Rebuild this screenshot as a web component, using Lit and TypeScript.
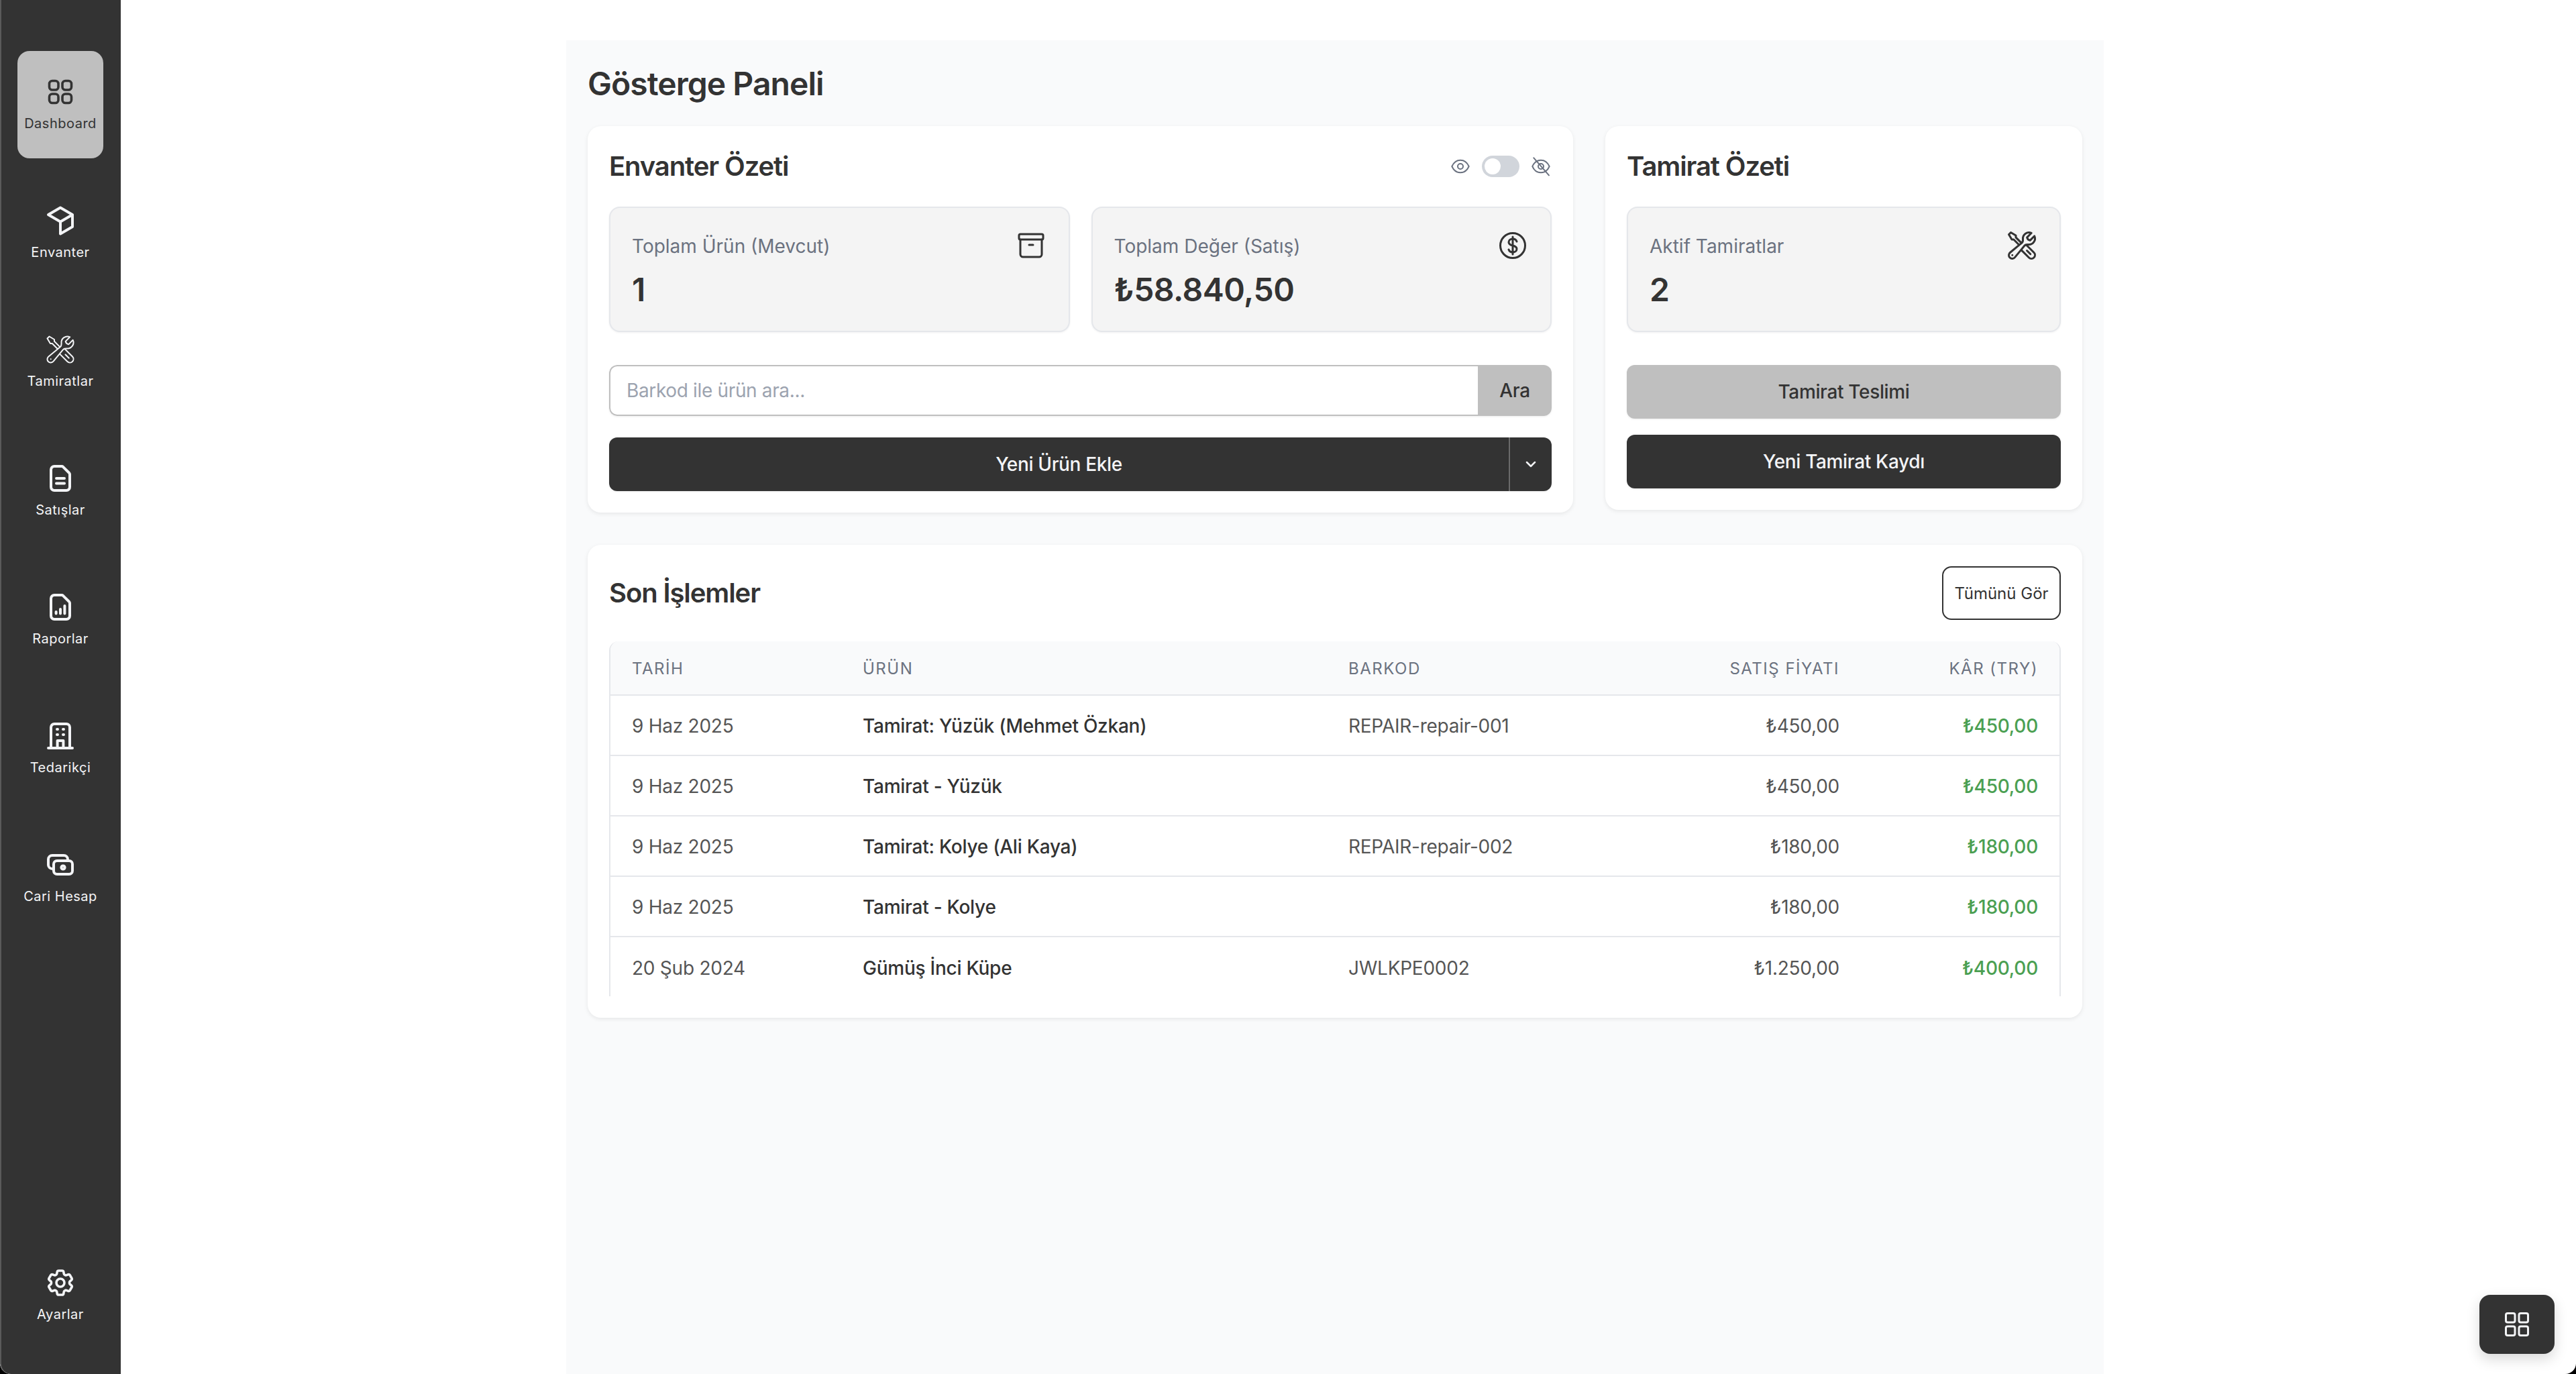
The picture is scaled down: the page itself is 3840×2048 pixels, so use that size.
import { LitElement, html, css, svg } from "lit";
import { customElement } from "lit/decorators.js";

const DOC_OUTLINE = "M7.5 3H13a1.500 1.500 0 0 1 1 .4L18.600 8a1.500 1.500 0 0 1 .4 1v9.500a2.500 2.500 0 0 1-2.500 2.500h-9A2.500 2.500 0 0 1 5 18.500v-13A2.500 2.500 0 0 1 7.500 3Z";

const ICONS = {
  grid: svg`<path stroke-width="1.8" d="M3.75 6A2.25 2.25 0 0 1 6 3.75h2.25A2.25 2.25 0 0 1 10.5 6v2.25a2.25 2.25 0 0 1-2.25 2.25H6a2.25 2.25 0 0 1-2.25-2.25V6ZM3.75 15.75A2.25 2.25 0 0 1 6 13.5h2.25a2.25 2.25 0 0 1 2.25 2.25V18a2.25 2.25 0 0 1-2.25 2.25H6A2.25 2.25 0 0 1 3.75 18v-2.25ZM13.5 6a2.25 2.25 0 0 1 2.25-2.25H18A2.25 2.25 0 0 1 20.25 6v2.25A2.25 2.25 0 0 1 18 10.5h-2.25a2.25 2.25 0 0 1-2.25-2.25V6ZM13.5 15.75a2.25 2.25 0 0 1 2.25-2.25H18a2.25 2.25 0 0 1 2.25 2.25V18A2.25 2.25 0 0 1 18 20.25h-2.25A2.25 2.25 0 0 1 13.5 18v-2.25Z"/>`,
  squares: svg`<rect x="3.750" y="3.750" width="6.750" height="6.750" rx="1.300"/><rect x="13.500" y="3.750" width="6.750" height="6.750" rx="1.300"/><rect x="3.750" y="13.500" width="6.750" height="6.750" rx="1.300"/><rect x="13.500" y="13.500" width="6.750" height="6.750" rx="1.300"/>`,
  cube: svg`<path stroke-width="2" d="M21 7.500l-9-5.250L3 7.500l9 5.250L21 7.500v9l-9 5.250v-9"/>`,
  wrench: svg`<path class="thin" d="M11.420 15.170 17.250 21A2.652 2.652 0 0 0 21 17.250l-5.877-5.877M11.420 15.170l2.496-3.030c.317-.384.740-.626 1.208-.766M11.420 15.170l-4.655 5.653a2.548 2.548 0 1 1-3.586-3.586l6.837-5.630m5.108-.233c.550-.164 1.163-.188 1.743-.140a4.500 4.500 0 0 0 4.486-6.336l-3.276 3.277a3.004 3.004 0 0 1-2.250-2.250l3.276-3.276a4.500 4.500 0 0 0-6.336 4.486c.091 1.076-.071 2.264-.904 2.950l-.102.085m-1.745 1.437L5.909 7.500H4.500L2.250 3.750l1.500-1.500L7.500 4.500v1.409l4.260 4.260m-1.745 1.437 1.745-1.437m6.615 8.206L15.750 15.750M4.867 19.125h.008v.008h-.008v-.008Z"/>`,
  doc: svg`<path stroke-width="2" d="${DOC_OUTLINE}"/><path stroke-width="2" d="M9 12h6M9 15.800h6"/>`,
  report: svg`<path stroke-width="2" d="${DOC_OUTLINE}"/><path stroke-width="2" d="M8.800 16.700v-1.200M12 16.700v-3.200M15.200 16.700v-5.700"/>`,
  building: svg`<path stroke-width="2" d="M5 21V5.500A2.500 2.500 0 0 1 7.500 3h9A2.500 2.500 0 0 1 19 5.500V21M3 21h18M9.800 21v-5.500h4.400V21"/><path stroke-width="2" d="M9.500 7h.5M14 7h.5M9.500 11h.5M14 11h.5"/>`,
  cash: svg`<rect stroke-width="2" x="7" y="9" width="14" height="10" rx="2.500"/><path stroke-width="2" d="M17.500 9V8a3 3 0 0 0-3-3H6a3 3 0 0 0-3 3v4.200a3 3 0 0 0 3 2.800h1"/><circle stroke-width="2" cx="14" cy="14" r="1.300"/>`,
  cog: svg`<g stroke-width="1.800"><path d="M9.594 3.940c.090-.542.560-.940 1.110-.940h2.593c.550 0 1.020.398 1.110.940l.213 1.281c.063.374.313.686.645.870.074.040.147.083.220.127.325.196.720.257 1.075.124l1.217-.456a1.125 1.125 0 0 1 1.370.490l1.296 2.247a1.125 1.125 0 0 1-.260 1.431l-1.003.827c-.293.241-.438.613-.430.992a7.723 7.723 0 0 1 0 .255c-.008.378.137.750.430.991l1.004.827c.424.350.534.955.260 1.430l-1.298 2.247a1.125 1.125 0 0 1-1.369.491l-1.217-.456c-.355-.133-.750-.072-1.076.124a6.470 6.470 0 0 1-.220.128c-.331.183-.581.495-.644.869l-.213 1.281c-.090.543-.560.940-1.110.940h-2.594c-.550 0-1.019-.398-1.110-.940l-.213-1.281c-.062-.374-.312-.686-.644-.870a6.520 6.520 0 0 1-.220-.127c-.325-.196-.720-.257-1.076-.124l-1.217.456a1.125 1.125 0 0 1-1.369-.490l-1.297-2.247a1.125 1.125 0 0 1 .260-1.431l1.004-.827c.292-.240.437-.613.430-.991a6.932 6.932 0 0 1 0-.255c.007-.380-.138-.751-.430-.992l-1.004-.827a1.125 1.125 0 0 1-.260-1.430l1.297-2.247a1.125 1.125 0 0 1 1.370-.491l1.216.456c.356.133.751.072 1.076-.124.072-.044.146-.086.220-.128.332-.183.582-.495.644-.869l.214-1.280Z"/><path d="M15 12a3 3 0 1 1-6 0 3 3 0 0 1 6 0Z"/></g>`,
  archive: svg`<path d="M4 7.500v11a2 2 0 0 0 2 2h12a2 2 0 0 0 2-2v-11"/><rect x="3" y="3.500" width="18" height="4" rx="1"/><path d="M10.500 11.500h3"/>`,
  dollar: svg`<circle cx="12" cy="12" r="9.250"/><path d="M15 9c-.4-1.200-1.600-2-3-2-1.700 0-3 1-3 2.500S10.300 11.600 12 12c1.700.4 3 1 3 2.500S13.700 17 12 17c-1.400 0-2.600-.8-3-2M12 5.500v13"/>`,
  eye: svg`<path d="M2.500 12C4.500 7.500 8 5 12 5s7.500 2.500 9.500 7c-2 4.500-5.500 7-9.500 7s-7.500-2.500-9.500-7Z"/><circle cx="12" cy="12" r="3"/>`,
  eyeOff: svg`<path d="M2.500 12C4.500 7.500 8 5 12 5s7.500 2.500 9.500 7c-2 4.500-5.500 7-9.500 7s-7.500-2.500-9.500-7Z"/><circle cx="12" cy="12" r="3"/><path d="M4 2.500 21 22"/>`,
  chevron: svg`<path stroke-width="2.500" d="m6 9 6 6 6-6"/>`,
};

type IconName = keyof typeof ICONS;

const icon = (name: IconName) => html`<svg class="icon" viewBox="0 0 24 24" fill="none" stroke="currentColor" stroke-width="1.5" stroke-linejoin="round" stroke-linecap="round">${ICONS[name]}</svg>`;

const NAV: { label: string; icon: IconName; active?: boolean }[] = [
  { label: "Dashboard", icon: "grid", active: true },
  { label: "Envanter", icon: "cube" },
  { label: "Tamiratlar", icon: "wrench" },
  { label: "Satışlar", icon: "doc" },
  { label: "Raporlar", icon: "report" },
  { label: "Tedarikçi", icon: "building" },
  { label: "Cari Hesap", icon: "cash" },
];

const ROWS = [
  { date: "9 Haz 2025", name: "Tamirat: Yüzük (Mehmet Özkan)", code: "REPAIR-repair-001", price: "₺450,00", profit: "₺450,00" },
  { date: "9 Haz 2025", name: "Tamirat - Yüzük", code: "", price: "₺450,00", profit: "₺450,00" },
  { date: "9 Haz 2025", name: "Tamirat: Kolye (Ali Kaya)", code: "REPAIR-repair-002", price: "₺180,00", profit: "₺180,00" },
  { date: "9 Haz 2025", name: "Tamirat - Kolye", code: "", price: "₺180,00", profit: "₺180,00" },
  { date: "20 Şub 2024", name: "Gümüş İnci Küpe", code: "JWLKPE0002", price: "₺1.250,00", profit: "₺400,00" },
];

@customElement("app-root")
export class AppRoot extends LitElement {
  static styles = css`
    :host {
      display: block;
      font-family: Inter, "Liberation Sans", sans-serif;
      color: #333;
      background: #000;
    }
    .window {
      display: flex;
      height: 2048px;
      background: #fff;
      border-radius: 0 0 16px 16px;
      overflow: hidden;
      position: relative;
    }
    .icon {
      width: 48px;
      height: 48px;
      display: block;
      flex: none;
    }
    .thin {
      stroke-width: 1;
    }
    .sidebar {
      width: 180px;
      flex: none;
      box-sizing: border-box;
      background: #333;
      border-left: 2px solid #5a5a5a;
      border-bottom-left-radius: 16px;
      padding: 76px 26px 37px 24px;
      display: flex;
      flex-direction: column;
      gap: 32px;
      color: #f3f4f6;
    }
    .nav-item {
      height: 160px;
      border-radius: 18px;
      display: flex;
      flex-direction: column;
      align-items: center;
      justify-content: center;
      gap: 8px;
      font-size: 20px;
      line-height: 30px;
      letter-spacing: 0.5px;
    }
    .nav-item.active {
      background: #bfbfbf;
      color: #333;
    }
    .spacer {
      flex: 1;
    }
    .content {
      flex: 1;
      padding: 60px 40px 0 0;
      display: flex;
      justify-content: center;
    }
    .panel {
      width: 2292px;
      box-sizing: border-box;
      background: #f9fafb;
      padding: 32px;
    }
    h1 {
      margin: 0 0 30px;
      font-size: 48px;
      line-height: 66px;
      font-weight: 600;
      letter-spacing: -0.95px;
    }
    h2 {
      margin: 0;
      font-size: 40px;
      line-height: 56px;
      font-weight: 600;
      letter-spacing: -1.1px;
    }
    .top {
      display: flex;
      align-items: flex-start;
      gap: 48px;
    }
    .card {
      background: #fff;
      border-radius: 20px;
      padding: 32px;
      box-shadow: 0 2px 6px rgba(0, 0, 0, 0.08);
      box-sizing: border-box;
    }
    .inventory {
      width: 1469px;
      flex: none;
    }
    .repairs {
      flex: 1;
    }
    .card-head {
      display: flex;
      align-items: center;
      justify-content: space-between;
      height: 56px;
      margin-bottom: 32px;
    }
    .toggle-group {
      display: flex;
      align-items: center;
      gap: 16px;
      color: #6b7280;
    }
    .toggle-group .icon {
      width: 32px;
      height: 32px;
    }
    .toggle {
      width: 56px;
      height: 32px;
      box-sizing: border-box;
      padding: 4px;
      border-radius: 16px;
      background: #d1d5db;
    }
    .knob {
      width: 24px;
      height: 24px;
      border-radius: 50%;
      background: #fff;
    }
    .stats {
      display: grid;
      grid-template-columns: 1fr 1fr;
      gap: 32px;
    }
    .stat {
      height: 187px;
      box-sizing: border-box;
      padding: 32px;
      background: #f4f4f4;
      border: 2px solid #e5e7eb;
      border-radius: 16px;
      box-shadow: 0 1px 3px rgba(0, 0, 0, 0.06);
      display: flex;
      justify-content: space-between;
      align-items: flex-start;
    }
    .stat .thin {
      stroke-width: 1.5;
    }
    .stat-text {
      padding-top: 5px;
    }
    .stat-label {
      font-size: 28px;
      line-height: 40px;
      color: #6b7280;
    }
    .stat-value {
      margin-top: 13px;
      font-size: 48px;
      line-height: 64px;
      font-weight: 600;
      letter-spacing: -0.5px;
    }
    .search {
      display: flex;
      height: 76px;
      margin-top: 49px;
      border-radius: 12px;
      overflow: hidden;
      box-shadow: 0 1px 3px rgba(0, 0, 0, 0.08);
    }
    .search-input {
      flex: 1;
      box-sizing: border-box;
      border: 2px solid #bfbfbf;
      border-right: none;
      border-radius: 12px 0 0 12px;
      padding: 0 24px;
      display: flex;
      align-items: center;
      font-size: 28px;
      letter-spacing: -0.35px;
      color: #9ca3af;
    }
    .search-btn {
      width: 110px;
      background: #bfbfbf;
      display: flex;
      align-items: center;
      justify-content: center;
      font-size: 28px;
      font-weight: 500;
      letter-spacing: -0.3px;
    }
    .btn {
      display: flex;
      align-items: center;
      justify-content: center;
      height: 80px;
      border-radius: 12px;
      font-size: 28px;
      font-weight: 500;
      letter-spacing: -0.35px;
      box-shadow: 0 1px 3px rgba(0, 0, 0, 0.08);
    }
    .btn.dark {
      background: #333;
      color: #f3f4f6;
    }
    .btn.grey {
      background: #bfbfbf;
    }
    .split {
      display: flex;
      margin-top: 32px;
    }
    .split .main-btn {
      flex: 1;
      border-radius: 12px 0 0 12px;
    }
    .split .caret {
      width: 64px;
      border-radius: 0 12px 12px 0;
      border-left: 2px solid #6b6b6b;
      box-sizing: border-box;
    }
    .caret .icon {
      width: 24px;
      height: 24px;
    }
    .repair-actions {
      margin-top: 49px;
      display: flex;
      flex-direction: column;
      gap: 24px;
    }
    .recent {
      margin-top: 48px;
      padding-bottom: 32px;
    }
    .recent-head {
      display: flex;
      align-items: center;
      justify-content: space-between;
      margin-bottom: 32px;
    }
    .outline-btn {
      width: 177px;
      height: 80px;
      box-sizing: border-box;
      border: 2.5px solid #333;
      border-radius: 14px;
      display: flex;
      align-items: center;
      justify-content: center;
      font-size: 24px;
    }
    .table {
      border: solid #e5e7eb;
      border-width: 0 2px;
      border-radius: 14px 14px 0 0;
      overflow: hidden;
      height: 529px;
      box-sizing: border-box;
    }
    .row {
      display: grid;
      grid-template-columns: 344px 724px 500px 1fr 296px;
      height: 90px;
      box-sizing: border-box;
      border-bottom: 2px solid #e5e7eb;
      align-items: center;
      font-size: 28px;
      letter-spacing: -0.25px;
      color: #555;
    }
    .row:last-child {
      border-bottom: none;
    }
    .row.head {
      height: 81px;
      background: #f9fafb;
      font-size: 24px;
      letter-spacing: 1.5px;
      color: #6b7280;
    }
    .cell {
      padding: 2px 32px 0;
    }
    .num {
      text-align: right;
    }
    .name {
      font-weight: 500;
      color: #333;
    }
    .profit {
      font-weight: 500;
      color: #4b9f52;
    }
    .fab {
      position: absolute;
      right: 32px;
      bottom: 30px;
      width: 112px;
      height: 88px;
      border-radius: 16px;
      background: #333;
      color: #f3f4f6;
      display: flex;
      align-items: center;
      justify-content: center;
      box-shadow: 0 8px 20px rgba(0, 0, 0, 0.15);
    }
  `;

  private navItem(item: (typeof NAV)[number]) {
    return html`<div class="nav-item ${item.active ? "active" : ""}">${icon(item.icon)}<span>${item.label}</span></div>`;
  }

  private stat(label: string, value: string, name: IconName) {
    return html`<div class="stat">
      <div class="stat-text">
        <div class="stat-label">${label}</div>
        <div class="stat-value">${value}</div>
      </div>
      ${icon(name)}
    </div>`;
  }

  render() {
    return html`
      <div class="window">
        <nav class="sidebar">
          ${NAV.map((n) => this.navItem(n))}
          <div class="spacer"></div>
          ${this.navItem({ label: "Ayarlar", icon: "cog" })}
        </nav>
        <main class="content">
          <div class="panel">
            <h1>Gösterge Paneli</h1>
            <div class="top">
              <section class="card inventory">
                <div class="card-head">
                  <h2>Envanter Özeti</h2>
                  <div class="toggle-group">
                    ${icon("eye")}
                    <div class="toggle"><div class="knob"></div></div>
                    ${icon("eyeOff")}
                  </div>
                </div>
                <div class="stats">
                  ${this.stat("Toplam Ürün (Mevcut)", "1", "archive")}
                  ${this.stat("Toplam Değer (Satış)", "₺58.840,50", "dollar")}
                </div>
                <div class="search">
                  <div class="search-input">Barkod ile ürün ara...</div>
                  <div class="search-btn">Ara</div>
                </div>
                <div class="split">
                  <div class="btn dark main-btn">Yeni Ürün Ekle</div>
                  <div class="btn dark caret">${icon("chevron")}</div>
                </div>
              </section>
              <section class="card repairs">
                <div class="card-head"><h2>Tamirat Özeti</h2></div>
                ${this.stat("Aktif Tamiratlar", "2", "wrench")}
                <div class="repair-actions">
                  <div class="btn grey">Tamirat Teslimi</div>
                  <div class="btn dark">Yeni Tamirat Kaydı</div>
                </div>
              </section>
            </div>
            <section class="card recent">
              <div class="recent-head">
                <h2>Son İşlemler</h2>
                <div class="outline-btn">Tümünü Gör</div>
              </div>
              <div class="table">
                <div class="row head">
                  <div class="cell">TARİH</div>
                  <div class="cell">ÜRÜN</div>
                  <div class="cell">BARKOD</div>
                  <div class="cell num">SATIŞ FİYATI</div>
                  <div class="cell num">KÂR (TRY)</div>
                </div>
                ${ROWS.map(
                  (r) => html`<div class="row">
                    <div class="cell">${r.date}</div>
                    <div class="cell name">${r.name}</div>
                    <div class="cell">${r.code}</div>
                    <div class="cell num">${r.price}</div>
                    <div class="cell num profit">${r.profit}</div>
                  </div>`,
                )}
              </div>
            </section>
          </div>
        </main>
        <div class="fab">${icon("squares")}</div>
      </div>
    `;
  }
}
